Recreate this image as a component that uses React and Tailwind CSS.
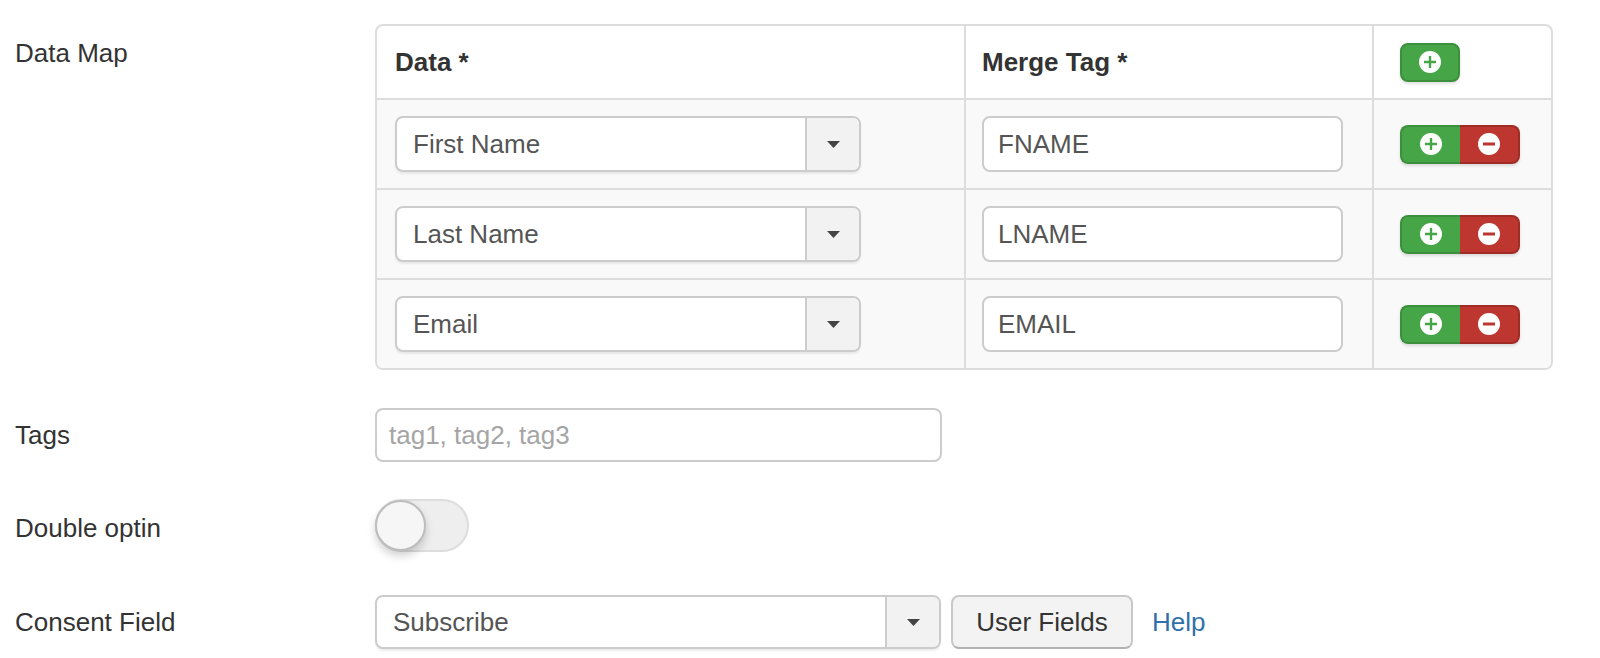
import React from "react";

const FONT = "font-['Liberation_Sans','Helvetica_Neue',Arial,sans-serif]";

function Caret() {
  return (
    <svg width="13" height="7" viewBox="0 0 13 7">
      <path d="M0 0h13L6.5 7z" fill="#444" />
    </svg>
  );
}

function PlusIcon() {
  return (
    <svg width="22" height="22" viewBox="0 0 22 22">
      <circle cx="11" cy="11" r="11" fill="#fff" />
      <path d="M11 5v12M5 11h12" stroke="#46a546" strokeWidth="2.4" />
    </svg>
  );
}

function MinusIcon() {
  return (
    <svg width="22" height="22" viewBox="0 0 22 22">
      <circle cx="11" cy="11" r="11" fill="#fff" />
      <path d="M5 11h12" stroke="#bd362f" strokeWidth="3" />
    </svg>
  );
}

function ChosenSelect({ value, className }) {
  return (
    <div
      className={`flex overflow-hidden rounded-[8px] border-2 border-[#ccc] bg-white shadow-[0_2px_2px_rgba(0,0,0,0.07)] ${className}`}
    >
      <div className="flex flex-1 items-center pl-[16px] text-[#555]">{value}</div>
      <div className="flex w-[54px] items-center justify-center border-l-2 border-[#ccc] bg-[#f2f2f2]">
        <Caret />
      </div>
    </div>
  );
}

function AddButton() {
  return (
    <button className="flex h-[39px] w-[60px] items-center justify-center rounded-[8px] border-2 border-[#3c8f3c] bg-[#46a546] shadow-[0_2px_3px_rgba(0,0,0,0.12)]">
      <PlusIcon />
    </button>
  );
}

function RowButtons() {
  return (
    <div className="flex h-[39px] rounded-[8px] shadow-[0_2px_3px_rgba(0,0,0,0.12)]">
      <button className="flex w-[60px] items-center justify-center rounded-l-[8px] border-2 border-r-0 border-[#3c8f3c] bg-[#46a546]">
        <PlusIcon />
      </button>
      <button className="flex w-[60px] items-center justify-center rounded-r-[8px] border-2 border-l-0 border-[#a02c26] bg-[#bd362f]">
        <MinusIcon />
      </button>
    </div>
  );
}

const rows = [
  { data: "First Name", tag: "FNAME" },
  { data: "Last Name", tag: "LNAME" },
  { data: "Email", tag: "EMAIL" },
];

export default function App() {
  return (
    <div className={`min-h-[658px] bg-white pl-[15px] pt-[24px] text-[26px] leading-[36px] text-[#333] ${FONT}`}>
      {/* Data map */}
      <div className="flex">
        <div className="w-[360px] pt-[11px]">Data Map</div>
        <div className="w-[1178px] overflow-hidden rounded-[8px] border-2 border-[#ddd]">
          <div className="grid grid-cols-[587px_408px_179px]">
            <div className="flex h-[72px] items-center pl-[18px] font-bold">Data *</div>
            <div className="flex h-[72px] items-center border-l-2 border-[#ddd] pl-[16px] font-bold">Merge Tag *</div>
            <div className="flex h-[72px] items-center border-l-2 border-[#ddd] pl-[26px]">
              <AddButton />
            </div>
            {rows.map((r) => (
              <React.Fragment key={r.tag}>
                <div className="flex h-[90px] items-center border-t-2 border-[#ddd] bg-[#f9f9f9] pl-[18px]">
                  <ChosenSelect value={r.data} className="h-[56px] w-[466px]" />
                </div>
                <div className="flex h-[90px] items-center border-l-2 border-t-2 border-[#ddd] bg-[#f9f9f9] pl-[16px]">
                  <div className="flex h-[56px] w-[361px] items-center rounded-[8px] border-2 border-[#ccc] bg-white pl-[14px] text-[#555]">
                    {r.tag}
                  </div>
                </div>
                <div className="flex h-[90px] items-center border-l-2 border-t-2 border-[#ddd] bg-[#f9f9f9] pl-[26px]">
                  <RowButtons />
                </div>
              </React.Fragment>
            ))}
          </div>
        </div>
      </div>

      {/* Tags */}
      <div className="mt-[38px] flex h-[54px] items-center">
        <div className="w-[360px]">Tags</div>
        <input
          readOnly
          placeholder="tag1, tag2, tag3"
          className="h-[54px] w-[567px] rounded-[8px] border-2 border-[#ccc] bg-white px-[12px] text-[#555] outline-none placeholder:text-[#a5a5a5]"
        />
      </div>

      {/* Double optin */}
      <div className="mt-[37px] flex h-[57px] items-center">
        <div className="w-[360px]">Double optin</div>
        <div className="self-start">
          <div className="relative h-[53px] w-[94px] rounded-full border-2 border-[#ddd] bg-[#eeeeee]">
            <div className="absolute left-[-2px] top-[-1px] h-[51px] w-[51px] rounded-full border-2 border-[#bdbdbd] bg-[#f6f6f6] shadow-[0_5px_8px_rgba(0,0,0,0.18)]" />
          </div>
        </div>
      </div>

      {/* Consent field */}
      <div className="mt-[39px] flex h-[54px] items-center">
        <div className="w-[360px]">Consent Field</div>
        <ChosenSelect value="Subscribe" className="h-[54px] w-[566px]" />
        <button className="ml-[10px] h-[54px] w-[182px] rounded-[8px] border-2 border-[#c8c8c8] border-b-[#b3b3b3] bg-[#f3f3f3] text-[#333]">
          User Fields
        </button>
        <a className="ml-[19px] text-[#3071a9]">Help</a>
      </div>
    </div>
  );
}
